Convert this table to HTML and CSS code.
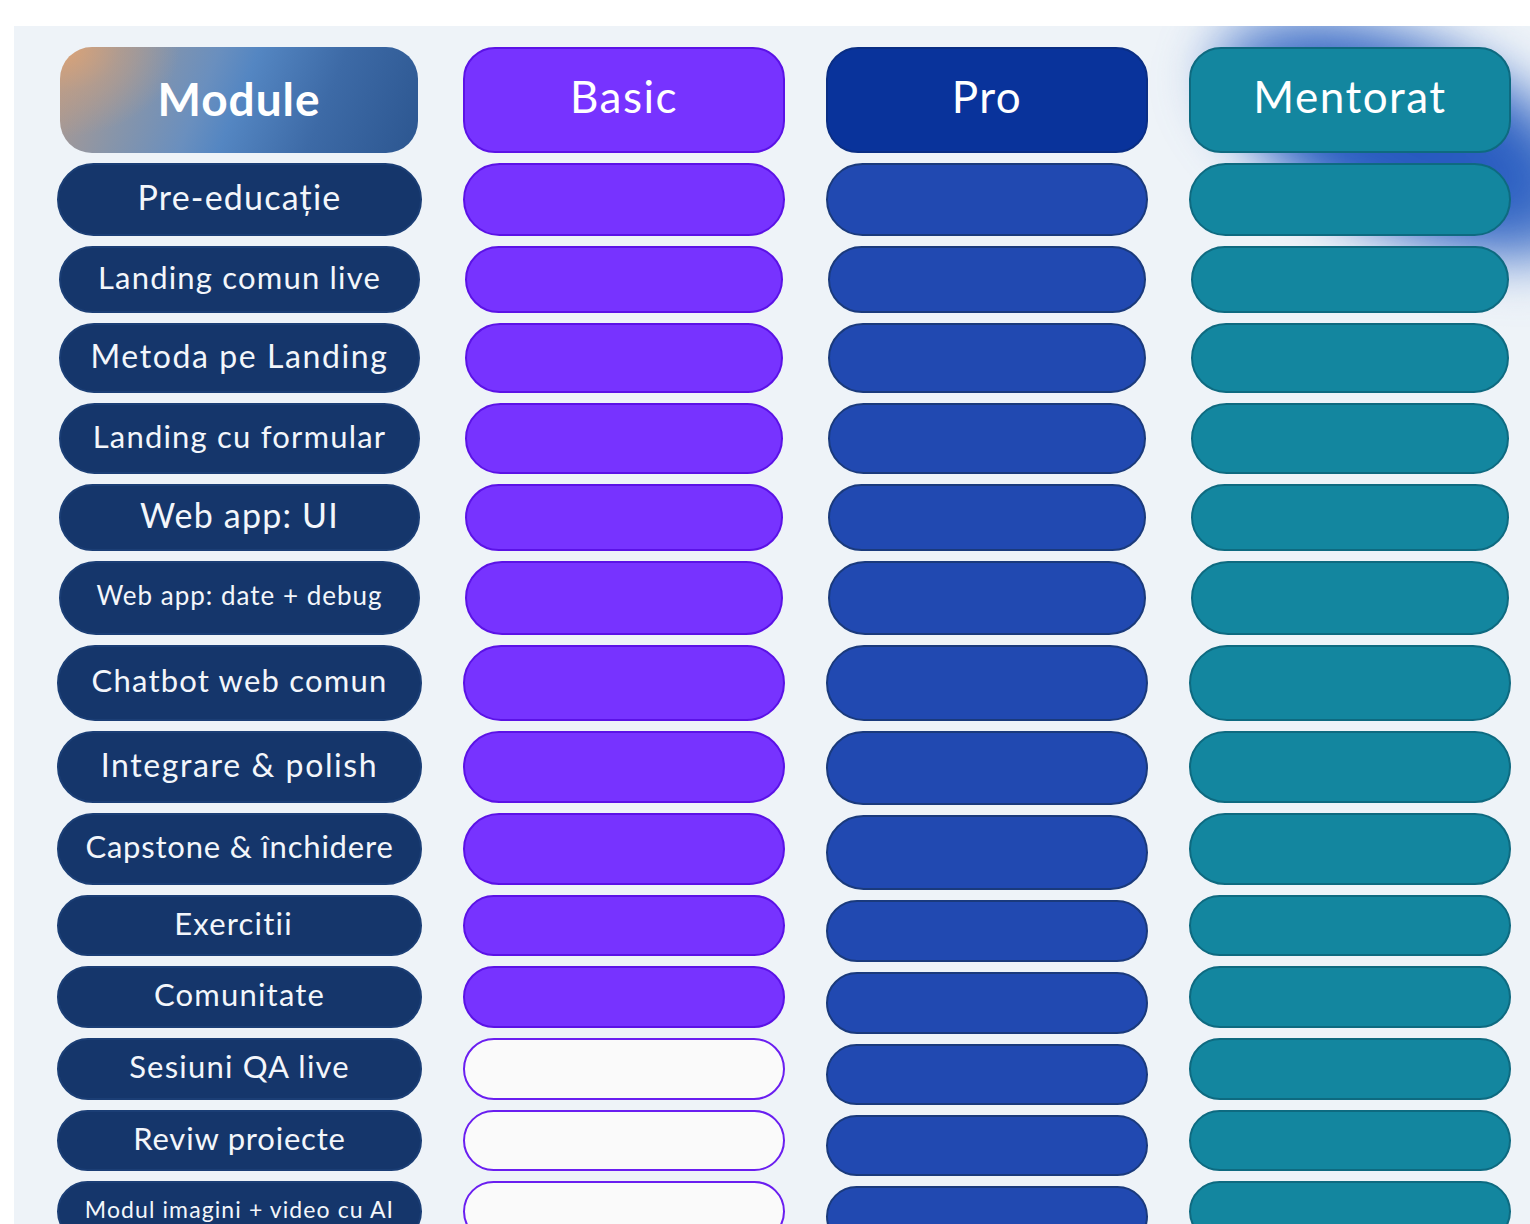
FILE: index.html
```html
<!DOCTYPE html>
<html lang="ro">
<head>
<meta charset="utf-8">
<title>Module</title>
<link rel="stylesheet" href="styles.css">
</head>
<body>
<div class="panel">
  <div class="glow"></div>
  <div class="table">
    <div class="col col-module">
      <div class="head head-module">Module</div>
      <div class="cell h73 t34">Pre-educație</div>
      <div class="cell h67 narrow t31">Landing comun live</div>
      <div class="cell h70 narrow t31 wide">Metoda pe Landing</div>
      <div class="cell h71 narrow t31">Landing cu formular</div>
      <div class="cell h67 narrow t34">Web app: UI</div>
      <div class="cell h74 narrow t26">Web app: date + debug</div>
      <div class="cell h76 t31">Chatbot web comun</div>
      <div class="cell h72 t33 wide">Integrare &amp; polish</div>
      <div class="cell h72 t31 tight">Capstone &amp; închidere</div>
      <div class="cell h61 t31 shift">Exercitii</div>
      <div class="cell h62 t31">Comunitate</div>
      <div class="cell h62 t31">Sesiuni QA live</div>
      <div class="cell h61 t31 tight">Reviw proiecte</div>
      <div class="cell h61 t23">Modul imagini + video cu AI</div>
    </div>

    <div class="col col-basic">
      <div class="head">Basic</div>
      <div class="cell h73"></div>
      <div class="cell h67 narrow"></div>
      <div class="cell h70 narrow"></div>
      <div class="cell h71 narrow"></div>
      <div class="cell h67 narrow"></div>
      <div class="cell h74 narrow"></div>
      <div class="cell h76"></div>
      <div class="cell h72"></div>
      <div class="cell h72"></div>
      <div class="cell h61"></div>
      <div class="cell h62"></div>
      <div class="cell h62 empty"></div>
      <div class="cell h61 empty"></div>
      <div class="cell h61 empty"></div>
    </div>

    <div class="col col-pro">
      <div class="head">Pro</div>
      <div class="cell h73"></div>
      <div class="cell h67 narrow"></div>
      <div class="cell h70 narrow"></div>
      <div class="cell h71 narrow"></div>
      <div class="cell h67 narrow"></div>
      <div class="cell h74 narrow"></div>
      <div class="cell h76"></div>
      <div class="cell h74"></div>
      <div class="cell h75"></div>
      <div class="cell h62"></div>
      <div class="cell h62"></div>
      <div class="cell h61"></div>
      <div class="cell h61"></div>
      <div class="cell h61"></div>
    </div>

    <div class="col col-mentor">
      <div class="head">Mentorat</div>
      <div class="cell h73"></div>
      <div class="cell h67 narrow"></div>
      <div class="cell h70 narrow"></div>
      <div class="cell h71 narrow"></div>
      <div class="cell h67 narrow"></div>
      <div class="cell h74 narrow"></div>
      <div class="cell h76"></div>
      <div class="cell h72"></div>
      <div class="cell h72"></div>
      <div class="cell h61"></div>
      <div class="cell h62"></div>
      <div class="cell h62"></div>
      <div class="cell h61"></div>
      <div class="cell h61"></div>
    </div>
  </div>
</div>
</body>
</html>
```

FILE: styles.css
```css
* { box-sizing: border-box; }

html, body {
  margin: 0;
  padding: 0;
  background: #ffffff;
  height: 100%;
  overflow: hidden;
}

body {
  font-family: Lato, "Open Sans", "DejaVu Sans", sans-serif;
  color: #ffffff;
}

.panel {
  position: relative;
  margin: 26px 0 0 14px;
  height: 1198px;
  background: #eef3f8;
  overflow: hidden;
  padding: 21px 0 0 43px;
}

.glow {
  position: absolute;
  left: 1185px;
  top: -5px;
  width: 430px;
  height: 200px;
  border-radius: 50%;
  transform: rotate(24deg);
  transform-origin: 40% 50%;
  background: radial-gradient(ellipse at 50% 50%, #2556be 0%, #2d61c2 45%, rgba(60, 110, 200, 0.55) 72%, rgba(238, 243, 248, 0) 100%);
  filter: blur(26px);
  z-index: 0;
}

.table {
  position: relative;
  z-index: 1;
  display: grid;
  grid-template-columns: 365px 322px 322px 322px;
  column-gap: 41px;
  align-items: start;
}

.col {
  display: flex;
  flex-direction: column;
  gap: 10px;
}

.head {
  height: 106px;
  border-radius: 32px;
  display: flex;
  align-items: center;
  justify-content: center;
  font-size: 44px;
  letter-spacing: 1.5px;
  padding-bottom: 8px;
  border: 2px solid transparent;
}

.head-module {
  margin: 0 4px 0 3px;
  height: 106px;
  border: none;
  font-weight: 700;
  font-size: 46px;
  letter-spacing: 1px;
  padding-bottom: 4px;
  background:
    radial-gradient(ellipse 120px 90px at 0% 0%, rgba(222, 164, 118, 0.95) 0%, rgba(200, 160, 130, 0.5) 50%, rgba(150, 150, 160, 0) 100%),
    linear-gradient(112deg, #b39a8c 0%, #8895a9 22%, #6a8fbe 40%, #5486c2 50%, #3d6aa6 72%, #2c5690 100%);
}

.cell {
  border-radius: 999px;
  display: flex;
  align-items: center;
  justify-content: center;
  border: 2px solid transparent;
  letter-spacing: 1.2px;
  padding-bottom: 6px;
  white-space: nowrap;
}

.narrow { margin: 0 2px; }

.h61 { height: 61px; }
.h62 { height: 62px; }
.h67 { height: 67px; }
.h70 { height: 70px; }
.h71 { height: 71px; }
.h72 { height: 72px; }
.h73 { height: 73px; }
.h74 { height: 74px; }
.h75 { height: 75px; }
.h76 { height: 76px; }

.t23 { font-size: 23px; letter-spacing: 1.1px; }
.t26 { font-size: 26px; letter-spacing: 1px; }
.t31 { font-size: 31px; }
.t33 { font-size: 33px; }
.t34 { font-size: 34px; }

.cell.wide { letter-spacing: 1.6px; font-size: 32px; }
.cell.tight { letter-spacing: 0.8px; }
.cell.shift { padding-right: 12px; }

/* Module column */
.col-module .cell {
  background: #15366b;
  border-color: #1b3e75;
  color: #f3f6fb;
}

/* Basic column */
.col-basic .head,
.col-basic .cell {
  background: #7733ff;
  border-color: #5b12e6;
}
.col-basic .cell.empty {
  background: #fafafa;
  border-color: #6a1ef0;
}

/* Pro column */
.col-pro .head {
  background: #09339b;
  border-color: #0a2e84;
}
.col-pro .cell {
  background: #2149b1;
  border-color: #1a3a7c;
}

/* Mentorat column */
.col-mentor .head,
.col-mentor .cell {
  background: #13869f;
  border-color: #0e6a80;
}
```
